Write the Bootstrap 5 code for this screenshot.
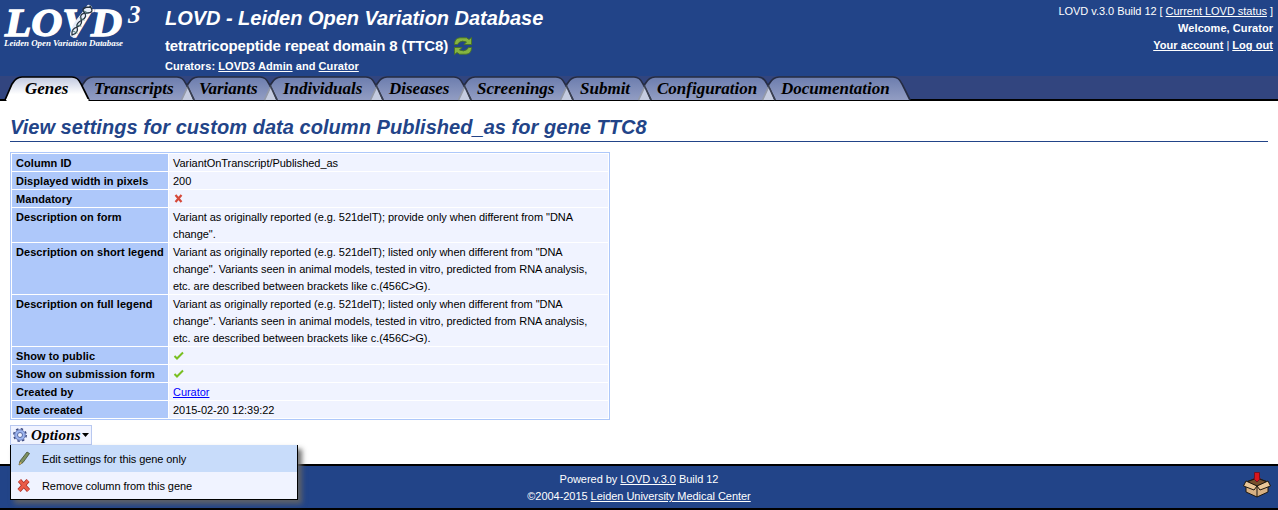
<!DOCTYPE html>
<html lang="en">
<head>
<meta charset="utf-8">
<title>LOVD - Leiden Open Variation Database</title>
<link href="https://cdn.jsdelivr.net/npm/bootstrap@5.3.0/dist/css/bootstrap.min.css" rel="stylesheet">
<style>
body{font:11px/17px "Liberation Sans",sans-serif;color:#000;background:#fff;height:510px;overflow:hidden;letter-spacing:-.04px}
.lovd-head{height:76px;background:#224488;color:#fff}
.lovd-head a,.lovd-foot a{color:#fff}
.logo-box{width:165px}
.site-title{font-size:20px;line-height:24px;font-weight:bold;font-style:italic;padding-top:6px;letter-spacing:-.03px}
.gene-title{font-size:15px;line-height:20px;font-weight:bold;margin-top:6px;letter-spacing:-.155px}
.curators{font-weight:bold;margin-top:2px;letter-spacing:.07px}
.user-box{padding:3px 5px 0 0}
.user-box .fw-bold{letter-spacing:.06px}
.tab-strip{height:25px;background:#32457f;border-bottom:2px solid #000}
.tab-shapes{left:0;top:0}
.tab-list{padding-left:25px;font:italic bold 17px/25px "Liberation Serif",serif;letter-spacing:0}
.tab-list a{color:#000;text-decoration:none}
.tab-list li{width:var(--w)}
.tab-list li:nth-child(1){--w:69px}.tab-list li:nth-child(2){--w:105px}.tab-list li:nth-child(3){--w:84px}
.tab-list li:nth-child(4){--w:106px}.tab-list li:nth-child(5){--w:88px}.tab-list li:nth-child(6){--w:103px}
.tab-list li:nth-child(7){--w:77px}.tab-list li:nth-child(8){--w:124px}.tab-list li:nth-child(9){--w:130px}
.page-title{font-size:20px;line-height:24px;font-weight:bold;font-style:italic;color:#224488;margin:0 0 10px;padding:14px 0 2px;border-bottom:1px solid #224488;letter-spacing:.045px}
.data-view{width:600px;border:1px solid #aec8fa;border-collapse:separate;border-spacing:1px}
.data-view th,.data-view td{padding:1px 4px 0;line-height:17px;vertical-align:top}
.data-view tr{height:17px}
.data-view th,.data-view td{padding:0 4px}
.data-view th>span,.data-view td>span{position:relative;top:1px}
.data-view th{width:156px;background:#aec8fa;letter-spacing:.06px}
.data-view td{background:#f0f3ff}
.data-view td a{color:#00f}
.data-view svg{display:block;margin:3px 0 3px}
.opt-btn{width:82px;height:20px;margin-top:5px;border:1px solid #b8c8f0;background:#f0f3ff;font:italic bold 15px/18px "Liberation Serif",serif;padding:0 2px;letter-spacing:.2px}
.opt-menu{left:10px;top:445px;width:288px;height:55px;border:1px solid #000;border-top:0;background:#f0f3ff;box-shadow:4px 4px 5px rgba(100,100,100,.9)}
.opt-menu div{height:27px;padding-left:5px}
.opt-menu .picked{background:#c8dcfa}
.opt-menu span{margin-left:10px;padding-top:2px;letter-spacing:-.08px}
.lovd-foot{margin-top:19px;height:46px;border:solid #000;border-width:2px 0;background:#224488;color:#fff;padding-top:5px}
.box-icon{right:6px;top:4px}
</style>
</head>
<body>
<header class="lovd-head d-flex text-nowrap">
  <div class="logo-box">
    <svg width="160" height="52" font-family="Liberation Serif,serif" font-style="italic" font-weight="bold" fill="#fff">
      <text x="5" y="35.500" font-size="39" textLength="117" lengthAdjust="spacingAndGlyphs" stroke="#fff" stroke-width="1.300">LOVD</text>
      <text x="128" y="23" font-size="25">3</text>
      <text x="4" y="46" font-size="8" textLength="119" lengthAdjust="spacingAndGlyphs">Leiden Open Variation Database</text>
      <g fill="none" stroke-linecap="round">
        <path d="M73 34Q75 26 80 20T89 8" stroke="#e6edf8" stroke-width="6"/>
        <path d="M72 35Q71 29 77 27T81 19T87 13T90 6M72 35Q79 33 77 27Q76 23 82 20T84 12T91 7" stroke="#26333f" stroke-width="1.300"/>
        <path d="M73 31l4 2M77 25l4 1M80 18l4 2M84 11l4 2" stroke="#4c7770"/>
      </g>
    </svg>
  </div>
  <div class="flex-grow-1">
    <div class="site-title">LOVD - Leiden Open Variation Database</div>
    <div class="gene-title d-flex align-items-center"><span>tetratricopeptide repeat domain 8 (TTC8)</span>
      <svg width="18" height="18" viewBox="0 0 18 18" style="margin-left:6px" fill="#86b440" stroke="#4a7424" stroke-width=".9"><path d="M.500 6.500Q1 1 6 .800H12.500L15 2.500 17.500 .500V7.500H10L12.500 5Q8 3 5 5.500L3.500 7.500H.500Z"/><path d="M17.500 11.500Q17 17 12 17.200H5.500L3 15.500 .500 17.500V10.500H8L5.500 13Q10 15 13 12.500L14.500 10.500H17.500Z"/></svg>
    </div>
    <div class="curators">Curators: <a href="#">LOVD3 Admin</a> and <a href="#">Curator</a></div>
  </div>
  <div class="user-box text-end">
    <div>LOVD v.3.0 Build 12 [ <a href="#">Current LOVD status</a> ]</div>
    <div class="fw-bold">Welcome, Curator</div>
    <div><a class="fw-bold" href="#">Your account</a> | <a class="fw-bold" href="#">Log out</a></div>
  </div>
</header>
<nav class="tab-strip position-relative">
  <svg class="tab-shapes position-absolute" width="1278" height="25"><defs>
    <linearGradient id="off" x2="0" y2="1"><stop stop-color="#6c7dae"/><stop offset="1" stop-color="#929dc3"/></linearGradient>
    <linearGradient id="on" x2="0" y2="1"><stop stop-color="#c0c8df"/><stop offset=".75" stop-color="#fff"/></linearGradient></defs>
    <g id="shapes" stroke-width="1.700"></g></svg>
  <ul class="tab-list list-unstyled d-flex m-0 position-relative text-nowrap">
    <li><a href="#">Genes</a></li><li><a href="#">Transcripts</a></li><li><a href="#">Variants</a></li><li><a href="#">Individuals</a></li><li><a href="#">Diseases</a></li><li><a href="#">Screenings</a></li><li><a href="#">Submit</a></li><li><a href="#">Configuration</a></li><li><a href="#">Documentation</a></li>
  </ul>
</nav>
<main class="px-2">
  <div style="padding:0 2px">
  <h1 class="page-title text-nowrap">View settings for custom data column Published_as for gene TTC8</h1>
  <table class="data-view text-nowrap">
    <tr><th><span>Column ID</span></th><td><span>VariantOnTranscript/Published_as</span></td></tr>
    <tr><th><span>Displayed width in pixels</span></th><td><span>200</span></td></tr>
    <tr><th><span>Mandatory</span></th><td><svg width="11" height="11"><path d="M2.500 2l6 7M8.500 2L2.500 9" stroke="#d5493a" stroke-width="2.200"/></svg></td></tr>
    <tr><th><span>Description on form</span></th><td><span>Variant as originally reported (e.g. 521delT); provide only when different from "DNA<br>change".</span></td></tr>
    <tr><th><span>Description on short legend</span></th><td><span>Variant as originally reported (e.g. 521delT); listed only when different from "DNA<br>change". Variants seen in animal models, tested in vitro, predicted from RNA analysis,<br>etc. are described between brackets like c.(456C&gt;G).</span></td></tr>
    <tr><th><span>Description on full legend</span></th><td><span>Variant as originally reported (e.g. 521delT); listed only when different from "DNA<br>change". Variants seen in animal models, tested in vitro, predicted from RNA analysis,<br>etc. are described between brackets like c.(456C&gt;G).</span></td></tr>
    <tr><th><span>Show to public</span></th><td><svg width="11" height="11"><path d="M1.500 6l2.500 2.500L10 2.500" fill="none" stroke="#79bf22" stroke-width="2"/></svg></td></tr>
    <tr><th><span>Show on submission form</span></th><td><svg width="11" height="11"><path d="M1.500 6l2.500 2.500L10 2.500" fill="none" stroke="#79bf22" stroke-width="2"/></svg></td></tr>
    <tr><th><span>Created by</span></th><td><span><a href="#">Curator</a></span></td></tr>
    <tr><th><span>Date created</span></th><td><span>2015-02-20 12:39:22</span></td></tr>
  </table>
  <div class="opt-btn d-flex align-items-center">
    <svg width="14" height="14" viewBox="0 0 14 14"><circle cx="7" cy="7" r="6.200" fill="none" stroke="#39477e" stroke-width="1.500" stroke-dasharray="2.440 2.430"/><circle cx="7" cy="7" r="5.300" fill="#9db5ef" stroke="#5a6cab" stroke-width=".8"/><circle cx="7" cy="7" r="2.500" fill="#f0f3ff" stroke="#4a5c9a" stroke-width=".9"/></svg>
    <span class="ms-1">Options</span>
    <svg class="ms-auto" width="7" height="4"><path d="M0 0h7L3.500 4z"/></svg>
  </div>
  </div>
</main>
<footer class="lovd-foot text-center position-relative">
  <div>Powered by <a href="#">LOVD v.3.0</a> Build 12</div>
  <div>©2004-2015 <a href="#">Leiden University Medical Center</a></div>
  <svg class="box-icon position-absolute" width="30" height="30" viewBox="0 0 30 30" stroke="#1d1710" stroke-width="1"><path d="M4 12L15 8 26 12V22L15 27 4 22Z" fill="#d8b083"/><path d="M5 12L15 8 25 12 15 16Z" fill="#76502c"/><path d="M12.500 2.500h5v6h1L15 12l-3.500-3.500h1z" fill="#d9151c" stroke="#701325"/><path d="M4 11L15 16 12 20 1.500 16ZM26 11L15 16 18 20 28.500 16Z" fill="#e9c698"/><path d="M15 16V27"/></svg>
</footer>
<div class="opt-menu position-absolute">
  <div class="picked d-flex align-items-center"><svg width="16" height="16"><path d="M3 14l1-4 7-9 2.500 1.500-6.500 9z" fill="#7e9160" stroke="#3f4b32" stroke-width=".8"/><path d="M3 14l1-3 2 1z" fill="#d8b060"/></svg><span>Edit settings for this gene only</span></div>
  <div class="d-flex align-items-center"><svg width="16" height="16"><path d="M3.500 2.500L12.500 12.500M12 2.500L3 12.500" stroke="#a82e26" stroke-width="4.200"/><path d="M3.500 2.500L12.500 12.500M12 2.500L3 12.500" stroke="#ea5b48" stroke-width="2.800"/></svg><span>Remove column from this gene</span></div>
</div>
<script src="https://cdn.jsdelivr.net/npm/bootstrap@5.3.0/dist/js/bootstrap.bundle.min.js"></script>
<script>
// Right foot of every tab; each tab starts beneath the one before it.
const feet=[18,89,194,277,383,471,573,651,775,910];
let out='';
for(let i=feet.length-1;i>0;i--){
  const l=feet[i-1],r=feet[i],on=i===1;
  out+=`<path d="M${l-13} 24L${l-6} 8Q${l-2} 1 ${l+4} 1H${r-17}Q${r-11} 1 ${r-8} 8L${r} 24" fill="url(#${on?'on':'off'})" stroke="${on?'#000':'#252c43'}"/>`;
  if(i>1&&i<9)out+=`<path d="M${r-12} 24L${r-6} 11L${r-1} 24Z" fill="#c5cce0"/><path d="M${r-12.5} 24L${r-6} 10" stroke="#949aa9"/><path d="M${r-7} 9L${r} 24" stroke="#3b4050"/>`;
}
document.getElementById('shapes').innerHTML=out+'<path d="M6.500 24H88.500" stroke="#fff" stroke-width="2"/>';
</script>
</body>
</html>
